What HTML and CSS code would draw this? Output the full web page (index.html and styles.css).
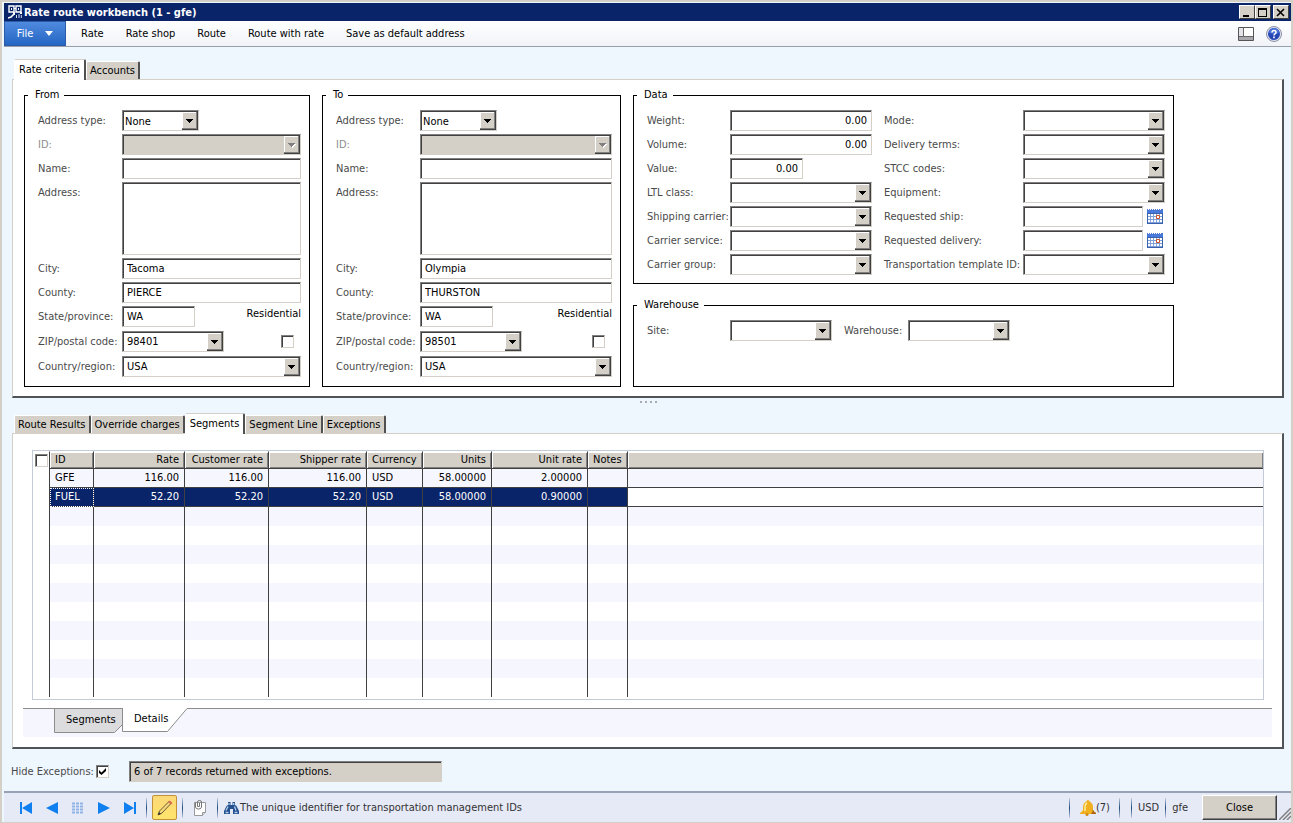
FILE: index.html
```html
<!DOCTYPE html>
<html lang="en">

<head>
    <meta charset="UTF-8">
    <meta name="viewport" content="width=device-width, initial-scale=1.0">
    <title>Rate route workbench</title>
    <link rel="stylesheet" href="styles.css">
</head>

<body>
    <header class="titlebar">
        <svg class="app-icon" width="14" height="14" viewBox="0 0 14 14">
            <path d="M1 1h5v6H1zM8 1h5v6H8z" fill="none" stroke="#fff" stroke-width="1.4"/>
            <path d="M3 3h1v2H3zM10 3h1v2h-1zM6 3h2v1H6zM5 7h2v3H5zM12 7h2v2h-2z" fill="#fff"/>
            <path d="M0 13l3-1 3-3" fill="none" stroke="#fff" stroke-width="1.6"/>
            <path d="M8.5 13v-3M11 13v-4M13.3 13v-3" fill="none" stroke="#cfd8ee"/>
        </svg>
        <h1>Rate route workbench (1 - gfe)</h1>
        <div class="window-buttons">
            <button type="button" aria-label="Minimize"><svg width="10" height="9"><path d="M1 7h6v2H1z"/></svg></button>
            <button type="button" aria-label="Maximize"><svg width="10" height="9"><path d="M0 0h9v9H0zM1 2v6h7V2z" fill-rule="evenodd"/></svg></button>
            <button type="button" class="gap" aria-label="Close window"><svg width="10" height="9"><path d="M1 1l7 7M8 1L1 8" stroke="#000" stroke-width="1.6"/></svg></button>
        </div>
    </header>

    <nav class="menubar">
        <button type="button" class="file-button">File <svg width="8" height="5"><path d="M0 0h8L4 5z" fill="#fff"/></svg></button>
        <a href="#">Rate</a>
        <a href="#">Rate shop</a>
        <a href="#">Route</a>
        <a href="#">Route with rate</a>
        <a href="#">Save as default address</a>
        <div class="menu-icons">
            <button type="button" aria-label="View">
                <svg width="16" height="14" viewBox="0 0 16 14">
                    <path d="M.5.5h15v13H.5z" fill="#fff" stroke="#555"/>
                    <path d="M1 10h14v3H1z" fill="#a9a9ad"/>
                    <path d="M5.5 1v9M1 9.5h14" stroke="#666"/>
                    <path d="M1 1h4v8H1z" fill="#e4e4e8"/>
                </svg>
            </button>
            <button type="button" aria-label="Help">
                <svg width="16" height="16" viewBox="0 0 16 16">
                    <circle cx="8" cy="8" r="7.5" fill="#dfe3ee" stroke="#8c93a8"/>
                    <circle cx="8" cy="8" r="6" fill="#2747b5"/>
                    <path d="M3 7a5 5 0 0 1 10 0q-5 2-10 0z" fill="#4a72d6"/>
                    <path d="M6 6.5q0-2 2-2t2 1.7q0 1-1 1.6t-1 1.7" fill="none" stroke="#fff" stroke-width="1.5"/>
                    <path d="M7.2 10.6h1.6v1.6H7.2z" fill="#fff"/>
                </svg>
            </button>
        </div>
    </nav>

    <main>
        <div class="tabs">
            <button type="button" class="tab active">Rate criteria</button>
            <button type="button" class="tab">Accounts</button>
        </div>
        <form class="panel criteria">
            <fieldset>
                <legend>From</legend>
                <div class="fields">
                    <label for="from-type">Address type:</label>
                    <select id="from-type" class="w-type"><option>None</option></select>
                    <label for="from-id" class="off">ID:</label>
                    <select id="from-id" disabled><option></option></select>
                    <label for="from-name">Name:</label>
                    <input type="text" id="from-name">
                    <label for="from-address">Address:</label>
                    <textarea id="from-address"></textarea>
                    <label for="from-city">City:</label>
                    <input type="text" id="from-city" value="Tacoma">
                    <label for="from-county">County:</label>
                    <input type="text" id="from-county" value="PIERCE">
                    <label for="from-state">State/province:</label>
                    <div class="split">
                        <input type="text" id="from-state" class="w-short" value="WA">
                        <label for="from-res" class="residential">Residential</label>
                    </div>
                    <label for="from-zip">ZIP/postal code:</label>
                    <div class="split">
                        <select id="from-zip" class="w-zip"><option>98401</option></select>
                        <input type="checkbox" id="from-res">
                    </div>
                    <label for="from-country">Country/region:</label>
                    <select id="from-country"><option>USA</option></select>
                </div>
            </fieldset>

            <fieldset>
                <legend>To</legend>
                <div class="fields">
                    <label for="to-type">Address type:</label>
                    <select id="to-type" class="w-type"><option>None</option></select>
                    <label for="to-id" class="off">ID:</label>
                    <select id="to-id" disabled><option></option></select>
                    <label for="to-name">Name:</label>
                    <input type="text" id="to-name">
                    <label for="to-address">Address:</label>
                    <textarea id="to-address"></textarea>
                    <label for="to-city">City:</label>
                    <input type="text" id="to-city" value="Olympia">
                    <label for="to-county">County:</label>
                    <input type="text" id="to-county" value="THURSTON">
                    <label for="to-state">State/province:</label>
                    <div class="split">
                        <input type="text" id="to-state" class="w-short" value="WA">
                        <label for="to-res" class="residential">Residential</label>
                    </div>
                    <label for="to-zip">ZIP/postal code:</label>
                    <div class="split">
                        <select id="to-zip" class="w-zip"><option>98501</option></select>
                        <input type="checkbox" id="to-res">
                    </div>
                    <label for="to-country">Country/region:</label>
                    <select id="to-country"><option>USA</option></select>
                </div>
            </fieldset>

            <div class="stack">
                <fieldset>
                    <legend>Data</legend>
                    <div class="data-columns">
                        <div class="fields">
                            <label for="weight">Weight:</label>
                            <input type="text" id="weight" class="num" value="0.00">
                            <label for="volume">Volume:</label>
                            <input type="text" id="volume" class="num" value="0.00">
                            <label for="value">Value:</label>
                            <input type="text" id="value" class="num w-short" value="0.00">
                            <label for="ltl">LTL class:</label>
                            <select id="ltl"><option></option></select>
                            <label for="carrier">Shipping carrier:</label>
                            <select id="carrier"><option></option></select>
                            <label for="service">Carrier service:</label>
                            <select id="service"><option></option></select>
                            <label for="group">Carrier group:</label>
                            <select id="group"><option></option></select>
                        </div>
                        <div class="fields wide-labels">
                            <label for="mode">Mode:</label>
                            <select id="mode"><option></option></select>
                            <label for="terms">Delivery terms:</label>
                            <select id="terms"><option></option></select>
                            <label for="stcc">STCC codes:</label>
                            <select id="stcc"><option></option></select>
                            <label for="equipment">Equipment:</label>
                            <select id="equipment"><option></option></select>
                            <label for="req-ship">Requested ship:</label>
                            <div class="split">
                                <input type="text" id="req-ship" class="w-date">
                                <button type="button" class="calendar" aria-label="Pick ship date">
                                    <svg width="16" height="16" viewBox="0 0 16 16">
                                        <path d="M0 1h16v15H0z" fill="#3a62ad"/>
                                        <path d="M1 6h14v9H1z" fill="#7fa0d8"/>
                                        <path d="M0 1h16v4H0z" fill="#4a78d8"/>
                                        <path d="M1 6h2v2H1zM4 6h2v2H4zM7 6h2v2H7zM10 6h2v2h-2zM13 6h2v2h-2zM1 9h2v2H1zM4 9h2v2H4zM7 9h2v2H7zM13 9h2v2h-2zM1 12h2v2H1zM4 12h2v2H4zM7 12h2v2H7zM10 12h2v2h-2zM13 12h2v2h-2z" fill="#fff"/>
                                        <path d="M9.5 7.5h3v3h-3z" fill="#fff" stroke="#d2582c"/>
                                        <path d="M1 1h14" stroke="#fff" stroke-width="2" stroke-dasharray="1 1"/>
                                    </svg>
                                </button>
                            </div>
                            <label for="req-delivery">Requested delivery:</label>
                            <div class="split">
                                <input type="text" id="req-delivery" class="w-date">
                                <button type="button" class="calendar" aria-label="Pick delivery date">
                                    <svg width="16" height="16" viewBox="0 0 16 16">
                                        <path d="M0 1h16v15H0z" fill="#3a62ad"/>
                                        <path d="M1 6h14v9H1z" fill="#7fa0d8"/>
                                        <path d="M0 1h16v4H0z" fill="#4a78d8"/>
                                        <path d="M1 6h2v2H1zM4 6h2v2H4zM7 6h2v2H7zM10 6h2v2h-2zM13 6h2v2h-2zM1 9h2v2H1zM4 9h2v2H4zM7 9h2v2H7zM13 9h2v2h-2zM1 12h2v2H1zM4 12h2v2H4zM7 12h2v2H7zM10 12h2v2h-2zM13 12h2v2h-2z" fill="#fff"/>
                                        <path d="M9.5 7.5h3v3h-3z" fill="#fff" stroke="#d2582c"/>
                                        <path d="M1 1h14" stroke="#fff" stroke-width="2" stroke-dasharray="1 1"/>
                                    </svg>
                                </button>
                            </div>
                            <label for="template">Transportation template ID:</label>
                            <select id="template"><option></option></select>
                        </div>
                    </div>
                </fieldset>
                <fieldset class="grow">
                    <legend>Warehouse</legend>
                    <div class="data-columns">
                        <div class="fields site">
                            <label for="site">Site:</label>
                            <select id="site"><option></option></select>
                        </div>
                        <div class="fields warehouse">
                            <label for="warehouse">Warehouse:</label>
                            <select id="warehouse"><option></option></select>
                        </div>
                    </div>
                </fieldset>
            </div>
        </form>

        <div class="splitter"><i></i><i></i><i></i><i></i></div>

        <div class="tabs lower">
            <button type="button" class="tab">Route Results</button>
            <button type="button" class="tab">Override charges</button>
            <button type="button" class="tab active">Segments</button>
            <button type="button" class="tab">Segment Line</button>
            <button type="button" class="tab">Exceptions</button>
        </div>
        <section class="panel results">
            <div class="grid-box">
                <table>
                    <colgroup>
                        <col class="c-mark"><col class="c-id"><col class="c-rate"><col class="c-customer"><col class="c-shipper">
                        <col class="c-currency"><col class="c-units"><col class="c-unit-rate"><col class="c-notes"><col>
                    </colgroup>
                    <thead>
                        <tr>
                            <th class="mark"><input type="checkbox" aria-label="Select all"></th>
                            <th>ID</th>
                            <th class="num">Rate</th>
                            <th class="num">Customer rate</th>
                            <th class="num">Shipper rate</th>
                            <th>Currency</th>
                            <th class="num">Units</th>
                            <th class="num">Unit rate</th>
                            <th>Notes</th>
                            <th></th>
                        </tr>
                    </thead>
                    <tbody>
                        <tr class="line">
                            <td></td><td>GFE</td><td class="num">116.00</td><td class="num">116.00</td><td class="num">116.00</td>
                            <td>USD</td><td class="num">58.00000</td><td class="num">2.00000</td><td></td><td></td>
                        </tr>
                        <tr class="line selected">
                            <td></td><td class="focused">FUEL</td><td class="num">52.20</td><td class="num">52.20</td><td class="num">52.20</td>
                            <td>USD</td><td class="num">58.00000</td><td class="num">0.90000</td><td></td><td></td>
                        </tr>
                        <tr><td></td><td></td><td></td><td></td><td></td><td></td><td></td><td></td><td></td><td></td></tr>
                        <tr><td></td><td></td><td></td><td></td><td></td><td></td><td></td><td></td><td></td><td></td></tr>
                        <tr><td></td><td></td><td></td><td></td><td></td><td></td><td></td><td></td><td></td><td></td></tr>
                        <tr><td></td><td></td><td></td><td></td><td></td><td></td><td></td><td></td><td></td><td></td></tr>
                        <tr><td></td><td></td><td></td><td></td><td></td><td></td><td></td><td></td><td></td><td></td></tr>
                        <tr><td></td><td></td><td></td><td></td><td></td><td></td><td></td><td></td><td></td><td></td></tr>
                        <tr><td></td><td></td><td></td><td></td><td></td><td></td><td></td><td></td><td></td><td></td></tr>
                        <tr><td></td><td></td><td></td><td></td><td></td><td></td><td></td><td></td><td></td><td></td></tr>
                        <tr><td></td><td></td><td></td><td></td><td></td><td></td><td></td><td></td><td></td><td></td></tr>
                        <tr><td></td><td></td><td></td><td></td><td></td><td></td><td></td><td></td><td></td><td></td></tr>
                    </tbody>
                </table>
            </div>
            <div class="sheet-tabs">
                <button type="button" class="sheet">
                    <svg width="69" height="24"><path d="M.5-1v24.500h60l8-8V-1z" fill="#dcdcdf" stroke="#8c8c8c"/></svg>
                    <span>Segments</span>
                </button>
                <button type="button" class="sheet current">
                    <svg width="66" height="24"><path d="M.5 0v23.500h45L65 .5V0z" fill="#fff"/><path d="M.5 0v23.500h45L65 .5" fill="none" stroke="#8c8c8c"/></svg>
                    <span>Details</span>
                </button>
            </div>
        </section>

        <div class="exceptions">
            <label for="hide">Hide Exceptions:</label>
            <input type="checkbox" id="hide" checked>
            <input type="text" class="message" value="6 of 7 records returned with exceptions." aria-label="Message" readonly>
        </div>
    </main>

    <footer class="statusbar">
        <div class="record-nav">
            <button type="button" aria-label="First"><svg width="14" height="12"><path d="M1 0h2v12H1zM13 0v12L3 6z"/></svg></button>
            <button type="button" aria-label="Previous"><svg width="14" height="12"><path d="M13 0v12L1 6z"/></svg></button>
            <button type="button" aria-label="Grid view">
                <svg width="14" height="12"><path d="M1 1.500h12M1 4.500h12M1 7.500h12M1 10.500h12" stroke="#8fb4e6" stroke-width="2" stroke-dasharray="3 1"/></svg>
            </button>
            <button type="button" aria-label="Next"><svg width="14" height="12"><path d="M1 0v12l12-6z"/></svg></button>
            <button type="button" aria-label="Last"><svg width="14" height="12"><path d="M11 0h2v12h-2zM1 0v12l10-6z"/></svg></button>
        </div>
        <span class="sep"></span>
        <button type="button" class="edit" aria-label="Edit">
            <svg width="18" height="18" viewBox="0 0 18 18">
                <path d="M2 16l1.500-4L13 2.500l2 2L6 14z" fill="#f6d77a" stroke="#6b5a34"/>
                <path d="M12 3l1.500-1.500 3 2.500L15 5.500z" fill="#d8694e"/>
                <path d="M2 16l1-3 2 2z" fill="#333"/>
            </svg>
        </button>
        <span class="sep"></span>
        <button type="button" class="attach" aria-label="Attachments">
            <svg width="14" height="16" viewBox="0 0 14 16">
                <path d="M1.500 2.500h11v10l-3 3h-8z" fill="#fff" stroke="#999"/>
                <path d="M12.500 12.500h-3v3" fill="#ddd" stroke="#999"/>
                <path d="M2.500 2v5q0 2 3 2t3-2V2q0-1.500-2-1.500T4.500 2v4.500h2V3" fill="none" stroke="#777"/>
            </svg>
        </button>
        <span class="sep"></span>
        <svg class="binoculars" width="15" height="14" viewBox="0 0 15 14">
            <path d="M4 1h2.500v3h2V1H11v3l1.500 1L15 10v3H9V8H6v5H0v-3l2.500-5L4 4z" fill="#24508f"/>
            <path d="M4 5.500L2 9.500M10.500 5.500l1.500 4M1.500 11.500H4.500M10.500 11.500h3M5 2v2M9.700 2v2" stroke="#b7cdec" stroke-width="1.300"/>
        </svg>
        <span class="hint">The unique identifier for transportation management IDs</span>
        <div class="status-right">
            <span class="sep"></span>
            <button type="button" class="alerts">
                <svg width="16" height="16" viewBox="0 0 16 16">
                    <path d="M8 0q1.500 0 1.500 1.500Q13 3 13 7v3q1 2 3 3v1H0v-1q2-1 3-3V7q0-4 3.500-5.500Q6.500 0 8 0z" fill="#f1b01f"/>
                    <path d="M7 3Q5 4 5 7v4" fill="none" stroke="#fff0a0" stroke-width="1.500"/>
                    <path d="M13 8v2q1 2 3 3v1h-5q2-2 2-6z" fill="#a9650f"/>
                    <circle cx="7" cy="14.500" r="1.500" fill="#d08a14"/>
                </svg>(7)
            </button>
            <span class="sep"></span>
            <span class="sep"></span>
            <span>USD</span>
            <span class="sep"></span>
            <span>gfe</span>
            <button type="button" class="close">Close</button>
            <svg class="grip" width="12" height="12"><path d="M0 12L12 0M4 12l8-8M8 12l4-4" stroke="#808080" stroke-width="1.500"/></svg>
        </div>
    </footer>
</body>

</html>
```
FILE: styles.css
```css
* {
    box-sizing: border-box;
}

body {
    display: flex;
    flex-direction: column;
    min-height: 100vh;
    margin: 0;
    padding: 1px 0 0 2px;
    border: 2px solid #d4d0c8;
    border-width: 2px 2px 1px;
    background-color: #eef6fe;
    color: #000;
}

body,
button,
input,
select,
textarea {
    font-family: "DejaVu Sans Condensed", "DejaVu Sans", sans-serif;
    font-size: 11px;
}

button {
    padding: 0;
    border: 0;
    background: none;
    color: inherit;
}

svg {
    display: block;
}

/* title bar */
.titlebar {
    display: flex;
    align-items: center;
    height: 18px;
    padding: 0 2px 0 4px;
    background-color: #0a246a;
    color: #fff;
}

.titlebar h1 {
    flex: 1;
    margin: 0 0 0 2px;
    font-size: 11px;
}

.window-buttons {
    display: flex;
}

.window-buttons button {
    display: flex;
    align-items: center;
    justify-content: center;
    width: 16px;
    height: 14px;
    background-color: #d4d0c8;
    border: 1px solid;
    border-color: #fff #404040 #404040 #fff;
}

.window-buttons .gap {
    margin-left: 2px;
}

/* menu */
.menubar {
    display: flex;
    align-items: center;
    gap: 22px;
    height: 26px;
    padding-right: 9px;
    border-bottom: 1px solid #9a9ea6;
    background: linear-gradient(#fff, #f0f3f8);
}

.menubar a {
    color: #000;
    text-decoration: none;
}

.file-button {
    display: flex;
    align-items: center;
    justify-content: center;
    gap: 12px;
    align-self: flex-start;
    width: 62px;
    height: 25px;
    margin-right: -7px;
    border: 1px solid #2a5ba8;
    background: linear-gradient(#4f8ade, #2566c4);
    color: #fff;
}

.menu-icons {
    display: flex;
    align-items: center;
    gap: 12px;
    margin-left: auto;
}

main {
    display: flex;
    flex: 1;
    flex-direction: column;
    padding: 12px 7px 0 8px;
}

/* tabs */
.tabs {
    display: flex;
    align-items: flex-end;
    height: 20px;
    padding-left: 2px;
}

.tabs.lower {
    margin-top: 6px;
}

.tab {
    height: 18px;
    padding: 0 3px;
    border: 1px solid #fff;
    border-right: 2px solid #505050;
    border-bottom: 0;
    border-radius: 2px 2px 0 0;
    background-color: #d4d0c8;
}

.tab.active {
    height: 21px;
    margin-bottom: -1px;
    padding: 0 4px 2px;
    border-top-color: #d4d0c8;
    background-color: #fff;
    z-index: 1;
}

.panel {
    border: 1px solid #d4d0c8;
    border-right: 2px solid #505458;
    border-bottom: 2px solid #505458;
    background-color: #fff;
}

/* form */
.criteria {
    display: grid;
    grid-template-columns: 286px 299px 541px;
    gap: 12px;
    padding: 8px 11px 9px;
}

fieldset {
    min-width: 0;
    margin: 0;
    padding: 8px 8px 9px 13px;
    border: 1px solid #000;
}

legend {
    margin-left: -10px;
    padding: 0 5px 0 7px;
    line-height: 14px;
}

.fields {
    display: grid;
    flex: 1;
    grid-template-columns: 84px 1fr;
    grid-auto-rows: minmax(21px, auto);
    gap: 3px 0;
}

.fields label {
    color: #4a4a4a;
    line-height: 21px;
    white-space: nowrap;
}

.fields .off {
    color: #8c8c8c;
}

input[type="text"],
select,
textarea {
    width: 100%;
    height: 21px;
    margin: 0;
    padding: 0 4px;
    border: 1px solid;
    border-color: #808080 #d4d0c8 #d4d0c8 #808080;
    border-radius: 0;
    background-color: #fff;
    box-shadow: inset 1px 1px #404040;
    color: #000;
}

textarea {
    display: block;
    height: 73px;
    resize: none;
}

select {
    appearance: none;
    background-image: url("data:image/svg+xml,%3Csvg xmlns='http://www.w3.org/2000/svg' width='16' height='18'%3E%3Cpath d='M0 0h16v18H0z' fill='%23404040'/%3E%3Cpath d='M0 0h15v17H0z' fill='%23808080'/%3E%3Cpath d='M0 0h14v16H0z' fill='%23fff'/%3E%3Cpath d='M1 1h13v15H1z' fill='%23d4d0c8'/%3E%3Cpath d='M4 7h7v1H4zM5 8h5v1H5zM6 9h3v1H6zM7 10h1v1H7z'/%3E%3C/svg%3E");
    background-position: right bottom;
    background-repeat: no-repeat;
}

select:disabled {
    opacity: 1;
    background-color: #d4d0c8;
    background-image: url("data:image/svg+xml,%3Csvg xmlns='http://www.w3.org/2000/svg' width='16' height='18'%3E%3Cpath d='M0 0h16v18H0z' fill='%23404040'/%3E%3Cpath d='M0 0h15v17H0z' fill='%23808080'/%3E%3Cpath d='M0 0h14v16H0z' fill='%23fff'/%3E%3Cpath d='M1 1h13v15H1z' fill='%23d4d0c8'/%3E%3Cpath d='M5 8h7v1H5zM6 9h5v1H6zM7 10h3v1H7zM8 11h1v1H8z' fill='%23fff'/%3E%3Cpath d='M4 7h7v1H4zM5 8h5v1H5zM6 9h3v1H6zM7 10h1v1H7z' fill='%23808080'/%3E%3C/svg%3E");
}

input[type="checkbox"] {
    flex: none;
    width: 13px;
    height: 13px;
    margin: 0;
    border: 1px solid;
    border-color: #808080 #d4d0c8 #d4d0c8 #808080;
    background-color: #fff;
    box-shadow: inset 1px 1px #404040;
    appearance: none;
}

input[type="checkbox"]:checked {
    background-image: url("data:image/svg+xml,%3Csvg xmlns='http://www.w3.org/2000/svg' width='11' height='11'%3E%3Cpath d='M2 4l2.500 2.500L9 2v3L4.500 9 2 7z'/%3E%3C/svg%3E");
}

input.num {
    text-align: right;
}

input.w-short {
    width: 73px;
}

select.w-type {
    width: 77px;
    padding: 2px 2px 0;
}

select.w-zip {
    width: 102px;
}

input.w-date {
    width: 120px;
}

.split {
    display: flex;
    justify-content: space-between;
    height: 22px;
}

.split input[type="checkbox"] {
    margin: 4px 7px 0 0;
}

.split .calendar {
    width: 18px;
    height: 20px;
}

.fields .residential {
    color: #000;
    line-height: 15px;
}

.stack {
    display: flex;
    flex-direction: column;
    gap: 14px;
}

.stack fieldset {
    padding-bottom: 8px;
}

.stack .grow {
    flex: 1;
}

.data-columns {
    display: flex;
    gap: 12px;
}

.data-columns .fields {
    grid-template-columns: 83px 142px;
}

.data-columns .wide-labels {
    grid-template-columns: 139px 142px;
}

.wide-labels .split {
    height: 21px;
}

.data-columns .site {
    flex: none;
    grid-template-columns: 83px 102px;
}

.data-columns .warehouse {
    grid-template-columns: 64px 102px;
}

.splitter {
    display: flex;
    gap: 3px;
    justify-content: center;
    height: 9px;
    padding-top: 3px;
}

.splitter i {
    width: 2px;
    height: 2px;
    background-color: #a8acb0;
}

/* results grid */
.results {
    display: flex;
    flex: 1;
    flex-direction: column;
    padding: 16px 10px 10px 10px;
}

.grid-box {
    flex: 1;
    margin: 0 8px 0 9px;
    border: 1px solid #c3ccd6;
}

table {
    width: 100%;
    border-spacing: 0;
    table-layout: fixed;
}

.c-mark { width: 17px; }
.c-id { width: 44px; }
.c-rate { width: 91px; }
.c-customer { width: 84px; }
.c-shipper { width: 98px; }
.c-currency { width: 56px; }
.c-units { width: 69px; }
.c-unit-rate { width: 96px; }
.c-notes { width: 40px; }

th,
td {
    height: 19px;
    padding: 0 5px;
    border-right: 1px solid #404040;
    font-weight: normal;
    line-height: 16px;
    text-align: left;
    white-space: nowrap;
}

th {
    height: 18px;
    border-top: 1px solid #fff;
    border-bottom: 1px solid #404040;
    background-color: #d4d0c8;
    box-shadow: inset 1px 1px #fff, inset -1px -1px #808080;
}

th.mark {
    padding: 0 2px;
    border-bottom: 0;
    background-color: #fff;
    box-shadow: none;
}

th.mark input {
    display: block;
}

th.num,
td.num {
    text-align: right;
}

th:last-child,
td:last-child {
    border-right: 0;
}

tbody tr:nth-child(odd) td:not(:first-child) {
    background-color: #f6f6fe;
}

.line td:not(:first-child) {
    border-bottom: 1px solid #404040;
}

.selected td:not(:first-child):not(:last-child) {
    background-color: #0a246a;
    color: #fff;
}

.selected .focused {
    outline: 1px dotted #fff;
    outline-offset: -1px;
}

.sheet-tabs {
    display: flex;
    height: 29px;
    margin-top: 8px;
    padding-left: 31px;
    border-top: 1px solid #8c8c8c;
    background-color: #f6f6fe;
}

.sheet {
    display: grid;
    align-self: flex-start;
}

.sheet svg,
.sheet span {
    grid-area: 1 / 1;
}

.sheet span {
    padding: 4px 0 0 12px;
    text-align: left;
}

.sheet.current {
    margin: -1px 0 0 -1px;
}

.exceptions {
    display: flex;
    align-items: center;
    height: 42px;
    padding-top: 3px;
    margin-left: -1px;
}

.exceptions label {
    width: 85px;
    color: #4a4a4a;
}

.exceptions input.message {
    width: 313px;
    margin-left: 20px;
    background-color: #d4d0c8;
}

/* status bar */
.statusbar {
    display: flex;
    align-items: center;
    height: 31px;
    padding-left: 15px;
    border-top: 2px solid #97a3b5;
    background-color: #e6e9f6;
    color: #333;
}

.record-nav {
    display: flex;
    gap: 12px;
    margin-right: 9px;
    fill: #1080f0;
}

.sep {
    width: 1px;
    height: 20px;
    background: linear-gradient(#c4cfe0, #1f4a7a, #c4cfe0);
}

.edit {
    display: flex;
    align-items: center;
    justify-content: center;
    width: 25px;
    height: 25px;
    margin: 0 5px;
    border: 1px solid #c2913a;
    border-radius: 2px;
    background: linear-gradient(#fbd878, #ffe56b);
}

.attach {
    margin: 0 10px;
}

.binoculars {
    margin: 0 1px 0 6px;
}

.status-right {
    display: flex;
    align-items: center;
    gap: 6px;
    margin-left: auto;
}

.alerts {
    display: flex;
    align-items: center;
    margin: 0 3px 0 4px;
}

.status-right .sep + .sep {
    margin-left: 5px;
}

.close {
    width: 75px;
    height: 25px;
    margin-left: 8px;
    border: 1px solid;
    border-color: #fff #404040 #404040 #fff;
    background-color: #d4d0c8;
    box-shadow: inset -1px -1px #808080;
    color: #000;
}

.grip {
    align-self: flex-end;
    margin-left: -4px;
}
```
